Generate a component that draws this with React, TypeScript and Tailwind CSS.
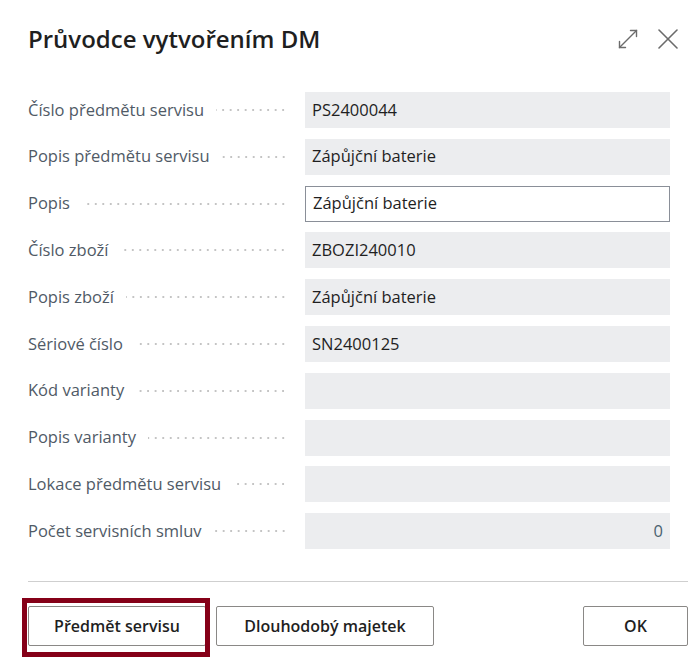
import React from "react";

type Row = {
  label: string;
  value?: string;
  editable?: boolean;
  numeric?: boolean;
};

const rows: Row[] = [
  { label: "Číslo předmětu servisu", value: "PS2400044" },
  { label: "Popis předmětu servisu", value: "Zápůjční baterie" },
  { label: "Popis", value: "Zápůjční baterie", editable: true },
  { label: "Číslo zboží", value: "ZBOZI240010" },
  { label: "Popis zboží", value: "Zápůjční baterie" },
  { label: "Sériové číslo", value: "SN2400125" },
  { label: "Kód varianty" },
  { label: "Popis varianty" },
  { label: "Lokace předmětu servisu" },
  { label: "Počet servisních smluv", value: "0", numeric: true },
];

function ExpandIcon() {
  return (
    <svg width="20" height="20" viewBox="0 0 20 20" fill="none" stroke="#6b6b6b" strokeWidth="1.4" strokeLinecap="round">
      <path d="M1.5 18.5 L18.5 1.5" />
      <path d="M12.5 1.5 H18.5 V7.5" />
      <path d="M1.5 12.5 V18.5 H7.5" />
    </svg>
  );
}

function CloseIcon() {
  return (
    <svg width="20" height="20" viewBox="0 0 20 20" fill="none" stroke="#6b6b6b" strokeWidth="1.6" strokeLinecap="round">
      <path d="M1 1 L19 19" />
      <path d="M19 1 L1 19" />
    </svg>
  );
}

function FieldRow({ row }: { row: Row }) {
  return (
    <div className="flex items-center h-[36px]">
      <div className="w-[277px] flex items-center shrink-0 pr-[18px]">
        <span className="text-[16.5px] text-[#505a66] whitespace-nowrap">{row.label}</span>
        <div className="flex-1 ml-[12px] h-[4px] bg-[radial-gradient(circle,#c4c4c4_0.9px,transparent_1.3px)] bg-[length:7.5px_4px] bg-repeat-x bg-right" />
      </div>
      <div
        className={`w-[365px] h-[36px] flex items-center px-[7px] text-[16.5px] ${
          row.editable
            ? "bg-white border border-[#8a8f98] text-[#1f1f1f]"
            : "bg-[#ecedef] text-[#1f1f1f]"
        } ${row.numeric ? "justify-end text-[#4a6270]" : ""}`}
      >
        {row.value}
      </div>
    </div>
  );
}

export default function App() {
  return (
    <div
      className="w-[700px] h-[670px] bg-white relative overflow-hidden"
      style={{ fontFamily: '"Open Sans", "Noto Sans", sans-serif' }}
    >
      {/* Header */}
      <div className="flex items-center justify-between pl-[28px] pr-[22px] pt-[20px] h-[58px]">
        <h1 className="text-[24px] font-semibold text-[#1f1f1f]">
          Průvodce vytvořením DM
        </h1>
        <div className="flex items-center gap-[20px]">
          <button className="w-[20px] h-[20px] flex items-center justify-center">
            <ExpandIcon />
          </button>
          <button className="w-[20px] h-[20px] flex items-center justify-center">
            <CloseIcon />
          </button>
        </div>
      </div>

      {/* Fields */}
      <div className="flex flex-col gap-[10.8px] pl-[28px] mt-[34px]">
        {rows.map((row) => (
          <FieldRow key={row.label} row={row} />
        ))}
      </div>

      {/* Footer */}
      <div className="ml-[28px] mr-[12px] mt-[32px] border-t border-[#cfcfcf]" />
      <div className="flex items-center justify-between ml-[28px] mr-[12px] mt-[24px]">
        <div className="flex items-center gap-[10px]">
          <button className="w-[178px] h-[40px] border border-[#8a8886] rounded-[2px] text-[16px] font-semibold text-[#1f1f1f]">
            Předmět servisu
          </button>
          <button className="w-[218px] h-[40px] border border-[#8a8886] rounded-[2px] text-[16px] font-semibold text-[#1f1f1f]">
            Dlouhodobý majetek
          </button>
        </div>
        <button className="w-[105px] h-[40px] border border-[#8a8886] rounded-[2px] text-[16px] font-semibold text-[#1f1f1f]">
          OK
        </button>
      </div>

      {/* Highlight frame */}
      <div className="absolute left-[22px] top-[598px] w-[188px] h-[59px] border-[5px] border-[#850018] pointer-events-none" />
    </div>
  );
}
